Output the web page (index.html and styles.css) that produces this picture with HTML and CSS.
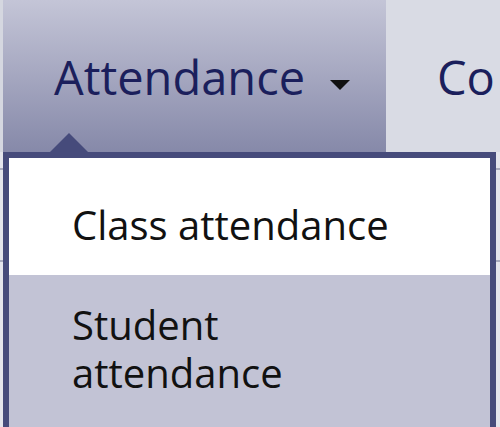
FILE: index.html
```html
<!DOCTYPE html>
<html>
<head>
<meta charset="utf-8">
<link rel="stylesheet" href="styles.css">
</head>
<body>
<div class="page">
  <nav class="nav">
    <div class="edge"></div>
    <div class="tab active">
      <span class="tab-label">Attendance</span>
      <svg class="caret" width="20" height="10" viewBox="0 0 20 10"><polygon points="0,0 20,0 10,10" fill="#111"/></svg>
    </div>
    <div class="tab">
      <span class="tab-label">Co</span>
    </div>
  </nav>
  <div class="content">
    <div class="line l1"></div>
    <div class="line l2"></div>
  </div>
  <div class="dropdown">
    <a class="item selected">Class attendance</a>
    <a class="item">Student<br>attendance</a>
  </div>
</div>
</body>
</html>
```
FILE: styles.css
```css
html, body {
  margin: 0;
  padding: 0;
  width: 500px;
  height: 427px;
  overflow: hidden;
  background: #e4e5ec;
}
.page {
  position: relative;
  width: 500px;
  height: 427px;
  font-family: "Open Sans", "Noto Sans", sans-serif;
}
.nav {
  display: flex;
  height: 152px;
  background: #d9dbe4;
}
.edge {
  width: 3px;
  background: #d5d7e0;
}
.tab {
  display: flex;
  align-items: flex-start;
  padding: 45px 0 0 51px;
  box-sizing: border-box;
  color: #1b1f5c;
  font-size: 47px;
  line-height: 64px;
}
.tab.active {
  width: 383px;
  background: linear-gradient(#c4c5d7, #8689a9);
}
.caret {
  margin: 35px 0 0 25px;
}
.content {
  height: 275px;
  background: #e4e5ec;
}
.line {
  height: 2px;
  background: #a9abbd;
}
.l1 { margin-top: 16px; }
.l2 { margin-top: 90px; }
.dropdown {
  position: absolute;
  left: 3px;
  top: 152px;
  width: 493px;
  height: 290px;
  box-sizing: border-box;
  border: 6px solid #464b7b;
  border-bottom: none;
  background: #c2c3d5;
}
.dropdown::before {
  content: "";
  position: absolute;
  left: 41px;
  top: -25px;
  border-left: 19px solid transparent;
  border-right: 19px solid transparent;
  border-bottom: 19px solid #464b7b;
}
.item {
  display: block;
  padding: 26px 0 0 63px;
  font-size: 40px;
  line-height: 48px;
  color: #111;
}
.item.selected {
  background: #fff;
  height: 117px;
  box-sizing: border-box;
  padding-top: 43px;
}
```
